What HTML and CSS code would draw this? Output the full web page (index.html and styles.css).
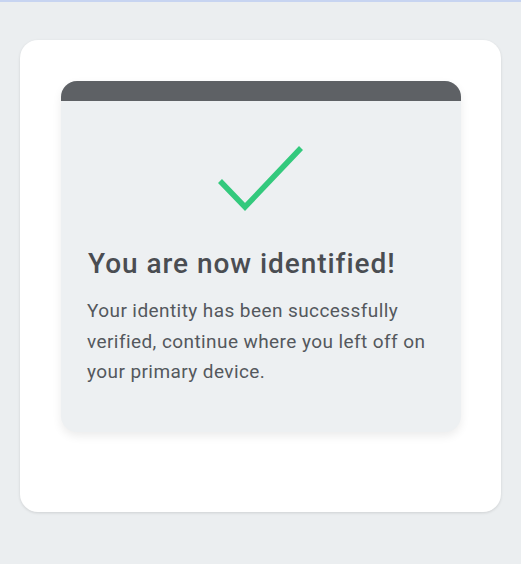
FILE: index.html
```html
<!DOCTYPE html>
<html lang="en">
<head>
<meta charset="utf-8">
<title>Identified</title>
<link rel="stylesheet" href="styles.css">
</head>
<body>
<div class="topline"></div>
<main class="page">
  <section class="outer">
    <div class="card">
      <div class="card-head"></div>
      <div class="card-body">
        <svg class="check" width="90" height="68" viewBox="0 0 90 68" aria-hidden="true">
          <polyline points="5,36 30,62 86,3" fill="none" stroke="#33c97d" stroke-width="5.5" stroke-linecap="butt" stroke-linejoin="miter"/>
        </svg>
        <h1 class="title">You are now identified!</h1>
        <p class="text">Your identity has been successfully verified, continue where you left off on your primary device.</p>
      </div>
    </div>
  </section>
</main>
</body>
</html>
```
FILE: styles.css
```css
html, body {
  margin: 0;
  padding: 0;
}
body {
  background: #ebeef0;
  font-family: Roboto, "Liberation Sans", Arial, sans-serif;
  width: 521px;
  height: 564px;
  overflow: hidden;
}
.topline {
  height: 2px;
  background: #c7d4f1;
}
.page {
  padding: 38px 20px 0 20px;
}
.outer {
  background: #ffffff;
  border-radius: 18px;
  box-shadow: 0 1px 3px rgba(0, 0, 0, 0.12);
  padding: 41px 40px 80px 41px;
  height: 472px;
  box-sizing: border-box;
}
.card {
  border-radius: 16px;
  overflow: hidden;
  background: #edf0f2;
  box-shadow: 0 4px 10px rgba(0, 0, 0, 0.08);
  height: 351px;
}
.card-head {
  height: 20px;
  background: #5e6165;
}
.card-body {
  padding: 44px 26px 0 26px;
}
.check {
  display: block;
  margin: 0 auto;
  position: relative;
  left: -1px;
}
.title {
  margin: 34px 0 0 1px;
  font-size: 28px;
  font-weight: 500;
  letter-spacing: 0.95px;
  line-height: 34px;
  color: #4a4d52;
}
.text {
  margin: 15px 0 0 0;
  font-size: 19px;
  letter-spacing: 0.42px;
  line-height: 30.5px;
  color: #54585d;
}
```
